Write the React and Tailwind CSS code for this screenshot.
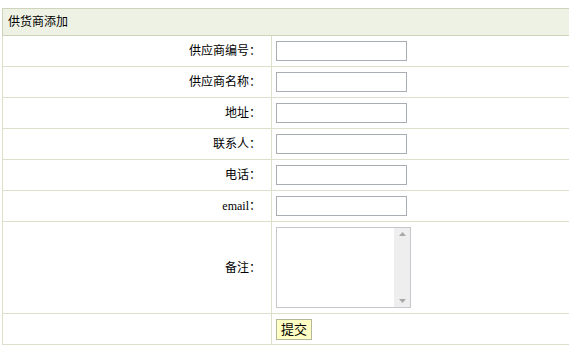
const fields = [
    { label: "供应商编号：" },
    { label: "供应商名称：" },
    { label: "地址：" },
    { label: "联系人：" },
    { label: "电话：" },
    { label: "email：" },
];

export default function App() {
    return (
        <div
            className="min-h-screen w-[569px] overflow-hidden bg-white pt-2 pl-[2px] text-[12px] text-black"
            style={{ fontFamily: '"Liberation Serif", "Noto Sans CJK SC", serif' }}
        >
            <table className="w-[580px] border-collapse">
                <tbody>
                    {/* header */}
                    <tr className="h-[27px] bg-[#eef2e5]">
                        <td colSpan={2} className="border border-[#cfd3bb] pl-[5px] text-left align-middle">
                            供货商添加
                        </td>
                    </tr>

                    {fields.map((f) => (
                        <tr key={f.label} className="h-[31px]">
                            <td className="w-[269px] border border-[#dcdfc9] pr-[10px] text-right align-middle">
                                {f.label}
                            </td>
                            <td className="border border-[#dcdfc9] pl-[4px] align-middle">
                                <input
                                    type="text"
                                    className="block h-[20px] w-[131px] border border-[#a9aeb4] bg-white outline-none"
                                />
                            </td>
                        </tr>
                    ))}

                    {/* remarks */}
                    <tr className="h-[92px]">
                        <td className="border border-[#dcdfc9] pr-[10px] text-right align-middle">
                            备注：
                        </td>
                        <td className="border border-[#dcdfc9] pl-[4px] align-middle">
                            <div className="flex h-[81px] w-[135px] border border-[#c4c8cc] bg-white">
                                <textarea className="h-full flex-1 resize-none outline-none" />
                                <div className="flex w-[16px] flex-col items-center justify-between bg-[#eeeeee] py-[4px]">
                                    <svg width="7" height="4" viewBox="0 0 7 4">
                                        <path d="M0 4 L3.5 0 L7 4 Z" fill="#a8a8a8" />
                                    </svg>
                                    <svg width="7" height="4" viewBox="0 0 7 4">
                                        <path d="M0 0 L3.5 4 L7 0 Z" fill="#a8a8a8" />
                                    </svg>
                                </div>
                            </div>
                        </td>
                    </tr>

                    {/* submit */}
                    <tr className="h-[31px]">
                        <td className="border border-[#dcdfc9]"></td>
                        <td className="border border-[#dcdfc9] pl-[4px] align-middle">
                            <button className="h-[21px] border border-[#b5b89a] bg-[#ffffc4] px-[4px] text-[13px] leading-none">
                                提交
                            </button>
                        </td>
                    </tr>
                </tbody>
            </table>
        </div>
    );
}
